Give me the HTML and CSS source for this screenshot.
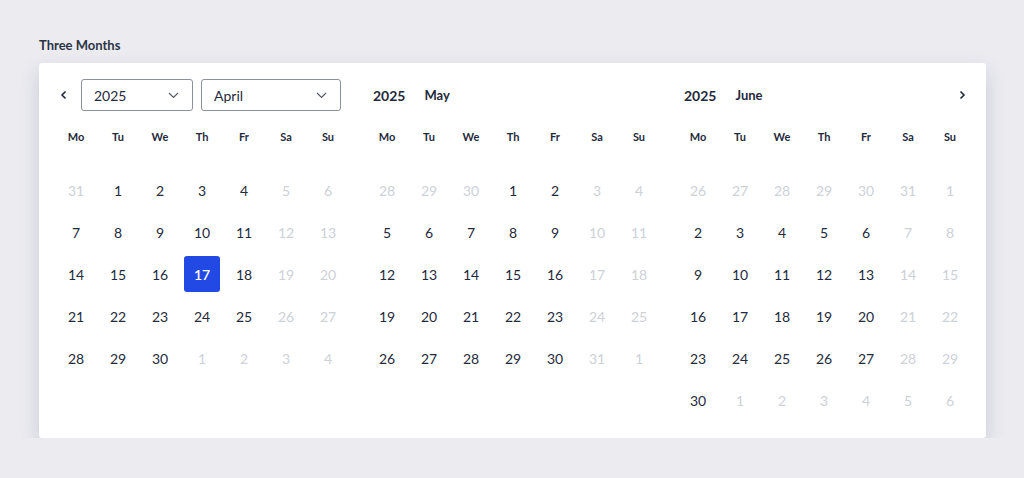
FILE: index.html
```html
<!DOCTYPE html>
<html lang="en">
<head>
	<meta charset="UTF-8">
	<title>Three Months</title>
	<link rel="stylesheet" href="styles.css">
</head>
<body>
	<div class="page">
		<div class="title">Three Months</div>
		<div class="card">
			<div class="month">
				<div class="head">
					<span class="arrow prev">
						<svg width="8" height="10" viewBox="0 0 8 10"><path d="M5.5 1.5 L2 5 L5.5 8.5" fill="none" stroke="#1f2a3c" stroke-width="1.6"/></svg>
					</span>
					<div class="select year">2025
						<svg class="chev" width="11" height="7" viewBox="0 0 11 7"><path d="M1 1 L5.5 5.5 L10 1" fill="none" stroke="#555b66" stroke-width="1.2"/></svg>
					</div>
					<div class="select mon">April
						<svg class="chev" width="11" height="7" viewBox="0 0 11 7"><path d="M1 1 L5.5 5.5 L10 1" fill="none" stroke="#555b66" stroke-width="1.2"/></svg>
					</div>
				</div>
				<div class="grid wd">
					<span>Mo</span><span>Tu</span><span>We</span><span>Th</span><span>Fr</span><span>Sa</span><span>Su</span>
				</div>
				<div class="grid days">
					<span class="out">31</span><span>1</span><span>2</span><span>3</span><span>4</span><span class="out">5</span><span class="out">6</span>
					<span>7</span><span>8</span><span>9</span><span>10</span><span>11</span><span class="out">12</span><span class="out">13</span>
					<span>14</span><span>15</span><span>16</span><span class="sel">17</span><span>18</span><span class="out">19</span><span class="out">20</span>
					<span>21</span><span>22</span><span>23</span><span>24</span><span>25</span><span class="out">26</span><span class="out">27</span>
					<span>28</span><span>29</span><span>30</span><span class="out">1</span><span class="out">2</span><span class="out">3</span><span class="out">4</span>
				</div>
			</div>
			<div class="month">
				<div class="head label">
					<span class="y">2025</span><span class="m">May</span>
				</div>
				<div class="grid wd">
					<span>Mo</span><span>Tu</span><span>We</span><span>Th</span><span>Fr</span><span>Sa</span><span>Su</span>
				</div>
				<div class="grid days">
					<span class="out">28</span><span class="out">29</span><span class="out">30</span><span>1</span><span>2</span><span class="out">3</span><span class="out">4</span>
					<span>5</span><span>6</span><span>7</span><span>8</span><span>9</span><span class="out">10</span><span class="out">11</span>
					<span>12</span><span>13</span><span>14</span><span>15</span><span>16</span><span class="out">17</span><span class="out">18</span>
					<span>19</span><span>20</span><span>21</span><span>22</span><span>23</span><span class="out">24</span><span class="out">25</span>
					<span>26</span><span>27</span><span>28</span><span>29</span><span>30</span><span class="out">31</span><span class="out">1</span>
				</div>
			</div>
			<div class="month">
				<div class="head label">
					<span class="y">2025</span><span class="m">June</span>
					<span class="arrow next">
						<svg width="8" height="10" viewBox="0 0 8 10"><path d="M2.5 1.5 L6 5 L2.5 8.5" fill="none" stroke="#1f2a3c" stroke-width="1.6"/></svg>
					</span>
				</div>
				<div class="grid wd">
					<span>Mo</span><span>Tu</span><span>We</span><span>Th</span><span>Fr</span><span>Sa</span><span>Su</span>
				</div>
				<div class="grid days">
					<span class="out">26</span><span class="out">27</span><span class="out">28</span><span class="out">29</span><span class="out">30</span><span class="out">31</span><span class="out">1</span>
					<span>2</span><span>3</span><span>4</span><span>5</span><span>6</span><span class="out">7</span><span class="out">8</span>
					<span>9</span><span>10</span><span>11</span><span>12</span><span>13</span><span class="out">14</span><span class="out">15</span>
					<span>16</span><span>17</span><span>18</span><span>19</span><span>20</span><span class="out">21</span><span class="out">22</span>
					<span>23</span><span>24</span><span>25</span><span>26</span><span>27</span><span class="out">28</span><span class="out">29</span>
					<span>30</span><span class="out">1</span><span class="out">2</span><span class="out">3</span><span class="out">4</span><span class="out">5</span><span class="out">6</span>
				</div>
			</div>
		</div>
	</div>
</body>
</html>
```

FILE: styles.css
```css
body {
	margin: 0;
	background: #ebebf0;
	font-family: Lato, "Noto Sans", sans-serif;
	color: #1f2a3c;
}
.page {
	padding: 37px 38px 0 39px;
}
.title {
	font-size: 13px;
	font-weight: 700;
	color: #2b3444;
	line-height: 17px;
	margin-bottom: 9px;
}
.card {
	width: 947px;
	box-sizing: border-box;
	background: #fff;
	border-radius: 3px;
	box-shadow: 0 8px 20px rgba(40, 40, 100, 0.16);
	padding: 16px 15px 20px 16px;
	display: flex;
	gap: 17px;
	align-items: flex-start;
}
.month {
	width: 294px;
}
.head {
	height: 32px;
	display: flex;
	align-items: center;
}
.arrow {
	width: 16px;
	height: 16px;
	display: flex;
	align-items: center;
	justify-content: center;
}
.prev {
	margin-left: 1px;
	margin-right: 9px;
}
.next {
	margin-left: auto;
	margin-right: 1px;
}
.select {
	height: 32px;
	box-sizing: border-box;
	border: 1px solid #8c9099;
	border-radius: 3px;
	padding: 0 12px;
	font-size: 14px;
	display: flex;
	align-items: center;
	justify-content: space-between;
	margin-right: 8px;
}
.year {
	width: 112px;
}
.mon {
	width: 140px;
}
.chev {
	margin-right: 1px;
}
.label {
	padding-left: 7px;
	font-weight: 700;
}
.label .y {
	font-size: 14px;
	margin-right: 19px;
}
.label .m {
	font-size: 13px;
}
.grid {
	display: grid;
	grid-template-columns: repeat(7, 42px);
}
.grid span {
	height: 36px;
	margin: 0 3px;
	display: flex;
	align-items: center;
	justify-content: center;
}
.wd {
	margin-top: 7px;
	font-size: 11px;
	font-weight: 700;
}
.days {
	margin-top: 18px;
	row-gap: 6px;
	font-size: 14px;
}
.days .out {
	color: #cdd1d8;
}
.days .sel {
	background: #2349e5;
	color: #fff;
	border-radius: 3px;
	font-weight: 600;
}
```
